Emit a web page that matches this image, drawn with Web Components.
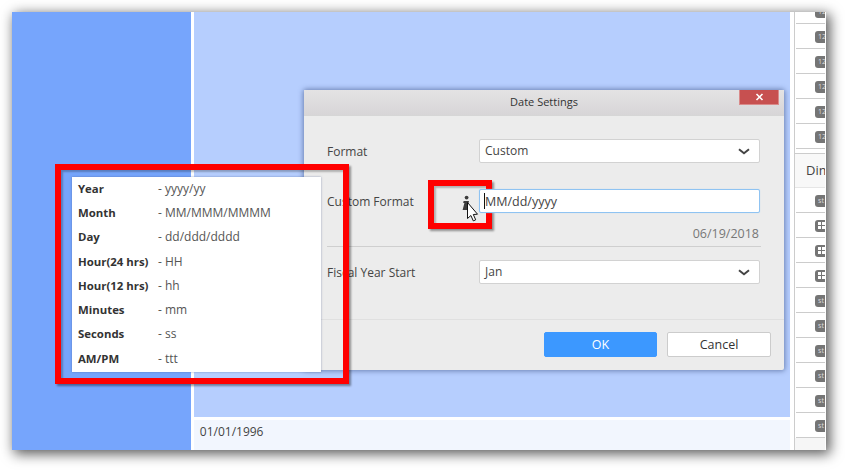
<!DOCTYPE html>
<html>
<head>
<meta charset="utf-8">
<title>Date Settings</title>
<style>
    html, body { margin: 0; background: #fff; }
    body { width: 845px; height: 470px; overflow: hidden; padding: 12px 0 0 12px; box-sizing: border-box; font-family: "Open Sans", "Noto Sans", sans-serif; }
</style>
</head>
<body>
<app-shell>
    <field-panel slot="right"></field-panel>
</app-shell>
<date-dialog>
    <form-row label="Format"><drop-select value="Custom"></drop-select></form-row>
    <form-row label="Custom Format" tall><format-input value="MM/dd/yyyy"></format-input></form-row>
    <form-row label="Fiscal Year Start" class="fiscal"><drop-select value="Jan"></drop-select></form-row>
</date-dialog>
<red-frame style="left:428px;top:180px;width:64px;height:49px"></red-frame>
<info-pointer></info-pointer>
<format-tip>
    <tip-row name="Year" value="yyyy/yy"></tip-row>
    <tip-row name="Month" value="MM/MMM/MMMM"></tip-row>
    <tip-row name="Day" value="dd/ddd/dddd"></tip-row>
    <tip-row name="Hour(24 hrs)" value="HH"></tip-row>
    <tip-row name="Hour(12 hrs)" value="hh"></tip-row>
    <tip-row name="Minutes" value="mm"></tip-row>
    <tip-row name="Seconds" value="ss"></tip-row>
    <tip-row name="AM/PM" value="ttt"></tip-row>
</format-tip>
<red-frame style="left:55px;top:164px;width:294px;height:220px"></red-frame>

<script>
// main window behind the dialog
class AppShell extends HTMLElement {
    connectedCallback() {
        this.attachShadow({mode:"open"}).innerHTML = `
        <style>
            :host { display:flex; width:814px; height:438px; background:#fff; box-shadow:3px 3px 12px 1px rgba(0,0,0,.65); }
            .left { width:179px; background:#76a5fc; margin-right:3px; }
            .mid { width:597px; display:flex; flex-direction:column; }
            .canvas { flex:1; background:#b6cefe; }
            .strip { height:30px; margin-top:3px; padding-left:6px; background:#f2f6fe; color:#444; font-size:12px; line-height:24px; }
            .right { margin-left:4px; width:31px; border-left:1px solid #ccc; overflow:hidden; }
        </style>
        <div class="left"></div>
        <div class="mid">
            <div class="canvas"></div>
            <div class="strip">01/01/1996</div>
        </div>
        <div class="right"><slot name="right"></slot></div>`;
    }
}

class FieldPanel extends HTMLElement {
    connectedCallback() {
        const row = (kind) => `<div class="row"><span class="badge">${kind == "grid"
            ? `<svg width="8" height="8" viewBox="0 0 8 8"><path fill="#fff" d="M0 0h3v3H0zM4 0h3v3H4zM0 4h3v3H0zM4 4h3v3H4z"/></svg>`
            : kind}</span></div>`;
        let top = "", bottom = "";
        for (let i = 0; i < 6; i++) top += row("12");
        ["st","grid","grid","grid","st","st","st","st","st","st"].forEach(k => bottom += row(k));
        this.attachShadow({mode:"open"}).innerHTML = `
        <style>
            :host { display:block; width:30px; height:438px; overflow:hidden; background:#fff; font-family:"Open Sans", sans-serif; }
            .list { margin-top:-13px; }
            .row { padding-top:7px; height:17px; border-bottom:1px solid #ccc; margin-left:1px; padding-left:19px; overflow:hidden; }
            .badge { display:flex; align-items:center; width:40px; height:12px; padding-left:3px; box-sizing:border-box; border-radius:3px; background:#757575; color:#ddd; font-size:7px; line-height:12px; }
            .head { height:35px; padding-left:11px; background:#f8f8f8; border-top:1px solid #ccc; border-bottom:1px solid #e6e6e6; box-sizing:border-box; margin-top:4px; color:#444; font-size:13px; line-height:33px; white-space:nowrap; overflow:hidden; }
            .foot { height:12px; background:#f6f6f6; }
        </style>
        <div class="list">${top}</div>
        <div class="head">Dim</div>
        <div class="rows2">${bottom}</div>
        <div class="foot"></div>`;
    }
}

class DateDialog extends HTMLElement {
    connectedCallback() {
        this.attachShadow({mode:"open"}).innerHTML = `
        <style>
            :host { position:absolute; left:304px; top:90px; width:480px; height:280px; display:flex; flex-direction:column; background:#ececec; border-radius:3px 3px 2px 2px; box-shadow:0 0 5px 1px rgba(60,80,130,.6); color:#444; font-size:12px; }
            header { position:relative; height:26px; flex:none; background:linear-gradient(#e4e3e4,#d7d5d7); border-bottom:1px solid #d6d6d6; box-sizing:border-box; text-align:center; font-size:11px; line-height:24px; color:#333; }
            .close { position:absolute; right:5px; top:0; width:40px; height:15px; background:#c75050; border:solid #d98a8a; border-width:0 1px 1px; box-sizing:border-box; }
            .close svg { display:block; margin:3px auto 0; }
            main { flex:1; padding:23px 23px 0; border-bottom:1px solid #e0e0e0; display:flex; flex-direction:column; }
            footer { height:50px; flex:none; padding:12px 13px 0 0; box-sizing:border-box; display:flex; justify-content:flex-end; gap:10px; }
            button { height:25px; padding:0; border-radius:2px; font:inherit; font-size:12.5px; }
            .ok { width:113px; border:1px solid #3c98ff; background:#3c98ff; color:#fff; }
            .cancel { width:104px; border:1px solid #ccc; background:#fff; color:#333; }
        </style>
        <header>Date Settings
            <div class="close"><svg width="9" height="8" viewBox="0 0 9 8"><path d="M1.5 1l6 6M7.5 1l-6 6" stroke="#fff" stroke-width="1.6" fill="none"/></svg></div>
        </header>
        <main><slot></slot></main>
        <footer><button class="ok">OK</button><button class="cancel">Cancel</button></footer>`;
    }
}

class FormRow extends HTMLElement {
    connectedCallback() {
        let tall = this.hasAttribute("tall");
        this.attachShadow({mode:"open"}).innerHTML = `
        <style>
            :host { display:block; font-size:12px; }
            .line { display:flex; align-items:center; height:24px; }
            label { width:152px; flex:none; margin-top:1px; }
            .ctl { flex:1; margin-right:1px; }
            .extra { height:34px; border-bottom:1px solid #cfcfcf; box-sizing:border-box; text-align:right; padding-right:2px; color:#777; font-size:12.5px; line-height:42px; }
            :host(:not([tall])) { margin-bottom:26px; }
            :host(.fiscal) { margin-top:13px; margin-bottom:0; }
        </style>
        <div class="line"><label>${this.getAttribute("label")}</label><div class="ctl"><slot></slot></div></div>
        ${tall ? `<div class="extra">06/19/2018</div>` : ""}`;
    }
}

class DropSelect extends HTMLElement {
    connectedCallback() {
        this.attachShadow({mode:"open"}).innerHTML = `
        <style>
            :host { display:flex; justify-content:space-between; align-items:center; height:24px; padding:0 9px 0 5px; box-sizing:border-box; background:#fff; border:1px solid #d2d2d2; border-radius:2px; color:#444; font-size:12px; }
            span { margin-top:-2px; }
            svg { display:block; }
        </style>
        <span>${this.getAttribute("value")}</span>
        <svg width="12" height="7" viewBox="0 0 12 7"><path d="M1 1.2l5 4 5-4" fill="none" stroke="#444" stroke-width="2"/></svg>`;
    }
}

class FormatInput extends HTMLElement {
    connectedCallback() {
        this.attachShadow({mode:"open"}).innerHTML = `
        <style>
            :host { position:relative; z-index:3; display:flex; align-items:center; height:24px; padding-left:4px; box-sizing:border-box; background:#fff; border:1px solid #8fc3f2; border-radius:2px; box-shadow:0 0 1px #a9d2f5; color:#444; font-size:12.5px; }
            i { width:1px; height:16px; background:#111; flex:none; }
        </style>
        <i></i><span>${this.getAttribute("value")}</span>`;
    }
}

class RedFrame extends HTMLElement {
    connectedCallback() {
        this.attachShadow({mode:"open"}).innerHTML = `
        <style>
            :host { position:absolute; z-index:2; box-sizing:border-box; border:6px solid #f00; box-shadow:2px 2px 2px rgba(0,0,0,.4), inset 2px 2px 2px rgba(0,0,0,.25); }
        </style>`;
    }
}

// info glyph with the mouse pointer on top
class InfoPointer extends HTMLElement {
    connectedCallback() {
        this.attachShadow({mode:"open"}).innerHTML = `
        <style>
            :host { position:absolute; z-index:4; left:460px; top:195px; width:24px; height:30px; }
            svg { display:block; }
        </style>
        <svg width="24" height="30" viewBox="0 0 24 30">
            <circle cx="6.6" cy="2.6" r="1.9" fill="#3c3c3c"/>
            <path d="M3.6 6h5.4l-1.5 6.6h1.2l-.5 2.4H2.6l1.8-7H3.2z" fill="#3c3c3c"/>
            <path d="M7.5 7.5v16l3.4-3 2.4 5.4 2.4-1.1-2.4-5.3 4.2-.3z" fill="#fff" stroke="#111" stroke-width="1" stroke-linejoin="round"/>
        </svg>`;
    }
}

class FormatTip extends HTMLElement {
    connectedCallback() {
        this.attachShadow({mode:"open"}).innerHTML = `
        <style>
            :host { position:absolute; z-index:2; left:72px; top:177px; width:249px; height:195px; padding-left:6px; box-sizing:border-box; display:flex; flex-direction:column; background:#fff; box-shadow:0 0 2px rgba(60,80,130,.5); color:#444; font-size:12px; }
        </style>
        <slot></slot>`;
    }
}

class TipRow extends HTMLElement {
    connectedCallback() {
        this.attachShadow({mode:"open"}).innerHTML = `
        <style>
            :host { display:flex; height:24.3px; align-items:center; }
            b { width:80px; flex:none; margin-top:-2px; color:#333; font-size:11.4px; }
            span { margin-top:-2px; color:#555; }
        </style>
        <b>${this.getAttribute("name")}</b><span>- ${this.getAttribute("value")}</span>`;
    }
}

customElements.define("app-shell", AppShell);
customElements.define("field-panel", FieldPanel);
customElements.define("date-dialog", DateDialog);
customElements.define("form-row", FormRow);
customElements.define("drop-select", DropSelect);
customElements.define("format-input", FormatInput);
customElements.define("red-frame", RedFrame);
customElements.define("info-pointer", InfoPointer);
customElements.define("format-tip", FormatTip);
customElements.define("tip-row", TipRow);
</script>
</body>
</html>
